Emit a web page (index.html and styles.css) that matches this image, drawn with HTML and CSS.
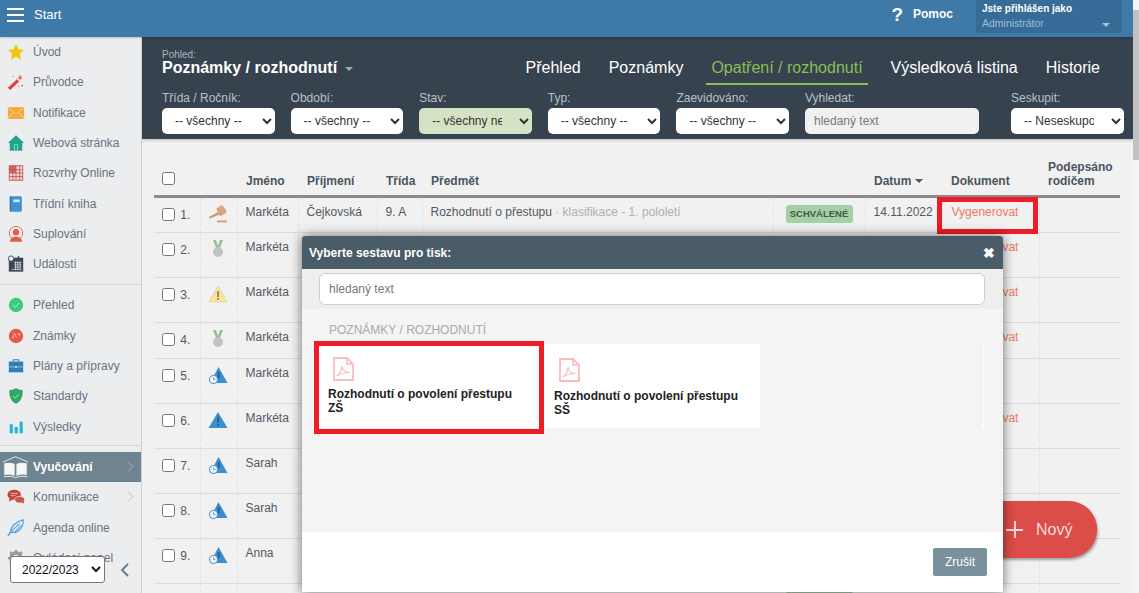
FILE: index.html
```html
<!DOCTYPE html>
<html lang="cs">
<head>
<meta charset="utf-8">
<title>Poznámky / rozhodnutí</title>
<link rel="stylesheet" href="styles.css">
</head>
<body>
<svg class="defs" width="0" height="0" aria-hidden="true">
  <symbol id="i-gavel" viewBox="0 0 20 20"><path d="m8.500 4.500 5.500-3.500 4.500 5.500-1 3-5 2.500-2.500-1.500z" fill="#dba583"/><path d="M9.500 8.500 1 13l.8 1.500L11 10.500z" fill="#c98f6e"/><rect x="9" y="16.500" width="10" height="1.800" fill="#d49a78"/></symbol>
  <symbol id="i-medal" viewBox="0 0 20 20"><path d="M5 1h3l2 6 2-6h3l-3.500 9h-3z" fill="#93bf9c"/><circle cx="10" cy="13" r="5" fill="#c2c2c2"/></symbol>
  <symbol id="i-warn" viewBox="0 0 20 20"><path d="M10 2 19 18H1z" fill="#f6e39f" stroke="#e6d184" stroke-width=".7"/><rect x="9.200" y="7" width="1.800" height="6" fill="#8f8a66"/><rect x="9.200" y="14" width="1.800" height="2" fill="#8f8a66"/></symbol>
  <symbol id="i-info" viewBox="0 0 20 20"><path d="M10 2 19.500 18H.5z" fill="#3b8fd0"/><rect x="9.200" y="7" width="1.800" height="6" fill="#24618f"/><rect x="9.200" y="14" width="1.800" height="2" fill="#24618f"/></symbol>
  <symbol id="i-clock" viewBox="0 0 20 20"><path d="M10.500 2 19.500 18H2z" fill="#3b8fd0"/><rect x="9.800" y="7" width="1.800" height="6" fill="#24618f"/><circle cx="5.500" cy="14.500" r="4" fill="#eef4f9" stroke="#5f97c4" stroke-width="1.100"/><path d="M5.500 12.300v2.200h2" fill="none" stroke="#5f97c4" stroke-width=".9"/></symbol>
  <symbol id="i-pdf" viewBox="0 0 21 24"><path d="M1 1h13l6 6v16H1z" fill="none" stroke="#fcbcbc" stroke-width="1.800"/><path d="M14 1v6h6" fill="none" stroke="#fcbcbc" stroke-width="1.500"/><path d="M3.500 19c3-1.500 5-5 5.500-10 .5 4 3 6.500 7.500 6.500-4.500 0-9 1-13 3.500z" fill="none" stroke="#fcbcbc" stroke-width="1.200"/></symbol>
</svg>

<header class="topbar">
  <div class="hamburger"><span></span><span></span><span></span></div>
  <span class="start">Start</span>
  <span class="help-mark">?</span>
  <span class="help-text">Pomoc</span>
  <div class="user">
    <div class="user-label">Jste přihlášen jako</div>
    <div class="user-role"><span>Administrátor</span><i class="caret caret-user"></i></div>
  </div>
</header>

<div class="layout">
  <nav class="sidebar">
    <div class="nav-group">
      <a class="nav-item"><svg class="nav-icon" viewBox="0 0 20 20"><path d="m10 1 2.700 6 6.300.7-4.700 4.300 1.300 6.500L10 15.300 4.400 18.500 5.700 12 1 7.700 7.300 7z" fill="#f1c40f"/></svg>Úvod</a>
      <a class="nav-item"><svg class="nav-icon" viewBox="0 0 20 20"><path d="m1 16.500 10-9.500 2.500 2.500-10 9.500z" fill="#d9443e"/><path d="m14 1.500.8 2 2-.5-.8 2 1.500 1.500-2.200.2-.8 1.800-1-1.800-2-.4 1.500-1.500z" fill="#e8776f"/><circle cx="17" cy="14" r="1" fill="#d9504a"/><circle cx="13" cy="15" r=".8" fill="#e8776f"/><circle cx="7" cy="4" r=".8" fill="#e8776f"/></svg>Průvodce</a>
      <a class="nav-item"><svg class="nav-icon" viewBox="0 0 20 20"><rect x="1" y="3.500" width="18" height="13" fill="#f2a83b"/><path d="m1 4 9 7 9-7M1 16l6.500-7M19 16l-6.500-7" fill="none" stroke="#fbdca8" stroke-width=".9"/></svg>Notifikace</a>
      <a class="nav-item"><svg class="nav-icon" viewBox="0 0 20 20"><path d="M10 1.500 19 10h-2v8.500H3V10H1z" fill="#1fa58a"/><rect x="8" y="11.500" width="4" height="7" fill="#bfe6dc"/><rect x="8.800" y="12.300" width="2.400" height="6.200" fill="#1fa58a"/></svg>Webová stránka</a>
      <a class="nav-item"><svg class="nav-icon" viewBox="0 0 20 20"><rect x="2.500" y="2" width="15" height="16" fill="#f2dcd9" stroke="#c0554d"/><path d="M2.500 6.500h15M2.500 10h15M2.500 14h15M6.500 2v16M10 2v16M14 2v16" stroke="#c0554d"/><rect x="2.500" y="2" width="7.500" height="8" fill="#c0554d" opacity=".85"/></svg>Rozvrhy Online</a>
      <a class="nav-item"><svg class="nav-icon" viewBox="0 0 20 20"><rect x="3.500" y="1.500" width="13" height="17" rx="1.500" fill="#3d93d6"/><rect x="3" y="1.500" width="1.500" height="17" fill="#2c74ad"/><rect x="7" y="5" width="7" height="3" fill="#d7eaf8"/></svg>Třídní kniha</a>
      <a class="nav-item"><svg class="nav-icon" viewBox="0 0 20 20"><circle cx="10" cy="9" r="7.500" fill="#fbeeec" stroke="#e05a4d"/><circle cx="10" cy="8" r="3.500" fill="#e05a4d"/><path d="M3 18.500c.5-4 4-5.500 7-5.500s6.500 1.500 7 5.500z" fill="#e05a4d"/></svg>Suplování</a>
      <a class="nav-item"><svg class="nav-icon" viewBox="0 0 20 20"><rect x="2" y="3" width="16" height="15.500" fill="#3a4652"/><path d="M8 8.500h8M8 11h8M8 13.500h8M5 16h11M9.500 7v10M12 7v10M14.500 7v10" stroke="#dfe3e7" stroke-width=".8"/><circle cx="4.500" cy="4" r="3" fill="#ebedef" stroke="#3a4652"/><rect x="12" y="1" width="1.500" height="3" fill="#3a4652"/></svg>Události</a>
    </div>
    <div class="nav-group">
      <a class="nav-item"><svg class="nav-icon" viewBox="0 0 20 20"><circle cx="10" cy="10" r="8" fill="#3ecb78"/><path d="m6.500 10 2.500 2.500 4.500-5" fill="none" stroke="#bdf0d1" stroke-width="1"/></svg>Přehled</a>
      <a class="nav-item"><svg class="nav-icon" viewBox="0 0 20 20"><circle cx="10" cy="10" r="8" fill="#e8574a"/><path d="m6 13 2.500-6 2 5M12 8h3M13.500 6.500v3" fill="none" stroke="#f7c3bd" stroke-width="1"/></svg>Známky</a>
      <a class="nav-item"><svg class="nav-icon" viewBox="0 0 20 20"><path d="M7 5V3h6v2" fill="none" stroke="#2f7fb8" stroke-width="1.200"/><rect x="2" y="5" width="16" height="12" fill="#2f7fb8"/><rect x="2" y="10.500" width="16" height="1" fill="#8fc0e0"/><rect x="9" y="10" width="2" height="2" fill="#cfe4f2"/></svg>Plány a přípravy</a>
      <a class="nav-item"><svg class="nav-icon" viewBox="0 0 20 20"><path d="M10 1.500c2.500 1.500 5 2 7.500 2 0 7-1.500 12-7.500 15-6-3-7.500-8-7.500-15 2.500 0 5-.5 7.500-2z" fill="#2fa866"/><path d="m7 10 2.200 2.200L13.500 8" fill="none" stroke="#c8eed8" stroke-width="1"/></svg>Standardy</a>
      <a class="nav-item"><svg class="nav-icon" viewBox="0 0 20 20"><rect x="3" y="7" width="3.500" height="10" fill="#24b5d6"/><rect x="8.500" y="10" width="3.500" height="7" fill="#24b5d6"/><rect x="14" y="4" width="3.500" height="13" fill="#24b5d6"/></svg>Výsledky</a>
    </div>
    <a class="nav-item nav-active"><svg class="nav-book" viewBox="0 0 30 26"><path d="M1 7 15 1l14 6" fill="none" stroke="#eef1f3" stroke-width="1"/><path d="M2 8c5-1 10-1 12.500 1v14C11 21 6 21 2 22z" fill="#f4f6f7" stroke="#71878f"/><path d="M28 8c-5-1-10-1-12.500 1v14c3.500-2 8.500-2 12.500-1z" fill="#f4f6f7" stroke="#71878f"/><path d="M2 23.500c5-1 10-1 13 1 3-2 8-2 13-1" fill="none" stroke="#eef1f3"/></svg><span>Vyučování</span><i class="chev chev-light"></i></a>
    <a class="nav-item"><svg class="nav-icon" viewBox="0 0 20 20"><ellipse cx="8" cy="7.500" rx="7.500" ry="5.500" fill="#c0453b"/><path d="m3 11-1 4 5-2.500z" fill="#c0453b"/><path d="M4 6h8M4 8.500h5.500" stroke="#f0c0bb" stroke-width="1"/><ellipse cx="14" cy="13" rx="5.500" ry="3.800" fill="#c9564c" stroke="#ebedef" stroke-width=".8"/><path d="m16 15.500 3 2-.5-3.500z" fill="#c9564c"/></svg>Komunikace<i class="chev"></i></a>
    <a class="nav-item"><svg class="nav-icon" viewBox="0 0 20 20"><path d="M1 19 4 14C4 9 9 3 18 1c.5 6-3 12-9 14l-5-.5z" fill="none" stroke="#5aa0dc" stroke-width="1.500"/><path d="M4.500 14 14 5M8 15 15.500 7" stroke="#5aa0dc" stroke-width="1.200"/></svg>Agenda online</a>
    <a class="nav-item"><svg class="nav-icon" viewBox="0 0 20 20"><circle cx="10" cy="10" r="5.500" fill="none" stroke="#999" stroke-width="4"/><path d="M10 1v3M10 16v3M1 10h3M16 10h3M3.500 3.500l2 2M14.500 14.500l2 2M3.500 16.500l2-2M14.500 5.500l2-2" stroke="#999" stroke-width="2.500"/></svg>Ovládací panel</a>
    <div class="side-foot">
      <select class="year"><option>2022/2023</option></select>
      <svg class="collapse" viewBox="0 0 10 16"><path d="M8 2 2 8l6 6" fill="none" stroke="#5f7a8c" stroke-width="1.800"/></svg>
    </div>
  </nav>

  <main class="content">
    <section class="panel">
      <div class="panel-top">
        <div class="view">
          <div class="view-label">Pohled:</div>
          <div class="view-title">Poznámky / rozhodnutí<i class="caret caret-view"></i></div>
        </div>
        <div class="tabs">
          <a class="tab">Přehled</a>
          <a class="tab">Poznámky</a>
          <a class="tab tab-active">Opatření / rozhodnutí</a>
          <a class="tab">Výsledková listina</a>
          <a class="tab">Historie</a>
        </div>
      </div>
      <div class="filters">
        <label class="filter"><span>Třída / Ročník:</span><select><option>-- všechny --</option></select></label>
        <label class="filter"><span>Období:</span><select><option>-- všechny --</option></select></label>
        <label class="filter"><span>Stav:</span><select class="select-on"><option>-- všechny neschválené --</option></select></label>
        <label class="filter"><span>Typ:</span><select><option>-- všechny --</option></select></label>
        <label class="filter"><span>Zaevidováno:</span><select><option>-- všechny --</option></select></label>
        <label class="filter filter-search"><span>Vyhledat:</span><input type="text" placeholder="hledaný text"></label>
        <label class="filter filter-group"><span>Seskupit:</span><select><option>-- Neseskupovat --</option></select></label>
      </div>
    </section>

    <table class="grid">
      <colgroup>
        <col class="c-no"><col class="c-ic"><col class="c-fn"><col class="c-ln"><col class="c-cl"><col class="c-su"><col class="c-st"><col class="c-da"><col class="c-do"><col class="c-si">
      </colgroup>
      <thead>
        <tr>
          <th><input type="checkbox" class="check check-head"></th>
          <th></th>
          <th>Jméno</th>
          <th>Příjmení</th>
          <th>Třída</th>
          <th>Předmět</th>
          <th></th>
          <th>Datum<i class="caret caret-sort"></i></th>
          <th>Dokument</th>
          <th>Podepsáno rodičem</th>
        </tr>
      </thead>
      <tbody>
        <tr class="r-first">
          <td><input type="checkbox" class="check"> 1.</td>
          <td><svg class="row-icon"><use href="#i-gavel"/></svg></td>
          <td>Markéta</td><td>Čejkovská</td><td>9. A</td>
          <td>Rozhodnutí o přestupu <span class="muted">· klasifikace - 1. pololetí</span></td>
          <td><span class="badge">SCHVÁLENÉ</span></td>
          <td>14.11.2022</td>
          <td class="doc-cell"><a class="gen">Vygenerovat</a><span class="mark"></span></td><td></td>
        </tr>
        <tr class="r-tall"><td><input type="checkbox" class="check"> 2.</td><td><svg class="row-icon"><use href="#i-medal"/></svg></td><td>Markéta</td><td></td><td></td><td></td><td></td><td></td><td><a class="gen">Vygenerovat</a></td><td></td></tr>
        <tr class="r-tall"><td><input type="checkbox" class="check"> 3.</td><td><svg class="row-icon"><use href="#i-warn"/></svg></td><td>Markéta</td><td></td><td></td><td></td><td></td><td></td><td><a class="gen">Vygenerovat</a></td><td></td></tr>
        <tr class="r-short"><td><input type="checkbox" class="check"> 4.</td><td><svg class="row-icon"><use href="#i-medal"/></svg></td><td>Markéta</td><td></td><td></td><td></td><td></td><td></td><td><a class="gen">Vygenerovat</a></td><td></td></tr>
        <tr class="r-tall"><td><input type="checkbox" class="check"> 5.</td><td><svg class="row-icon"><use href="#i-clock"/></svg></td><td>Markéta</td><td></td><td></td><td></td><td></td><td></td><td></td><td></td></tr>
        <tr class="r-tall"><td><input type="checkbox" class="check"> 6.</td><td><svg class="row-icon"><use href="#i-info"/></svg></td><td>Markéta</td><td></td><td></td><td></td><td></td><td></td><td><a class="gen">Vygenerovat</a></td><td></td></tr>
        <tr class="r-tall"><td><input type="checkbox" class="check"> 7.</td><td><svg class="row-icon"><use href="#i-clock"/></svg></td><td>Sarah</td><td></td><td></td><td></td><td></td><td></td><td></td><td></td></tr>
        <tr class="r-tall"><td><input type="checkbox" class="check"> 8.</td><td><svg class="row-icon"><use href="#i-clock"/></svg></td><td>Sarah</td><td></td><td></td><td></td><td></td><td></td><td></td><td></td></tr>
        <tr class="r-tall"><td><input type="checkbox" class="check"> 9.</td><td><svg class="row-icon"><use href="#i-clock"/></svg></td><td>Anna</td><td></td><td></td><td></td><td></td><td></td><td></td><td></td></tr>
        <tr class="r-tall"><td></td><td></td><td></td><td></td><td></td><td></td><td><span class="badge">SCHVÁLENÉ</span></td><td></td><td></td><td></td></tr>
      </tbody>
    </table>
  </main>
  <div class="scrollbar"><div class="thumb"></div></div>
</div>

<a class="fab"><span class="fab-plus"></span>Nový</a>

<section class="modal">
  <header class="modal-head"><span>Vyberte sestavu pro tisk:</span><span class="modal-x">✖</span></header>
  <div class="modal-search"><input type="text" placeholder="hledaný text"></div>
  <div class="modal-body">
    <h3 class="modal-section">POZNÁMKY / ROZHODNUTÍ</h3>
    <div class="cards">
      <a class="card card-marked"><svg class="pdf"><use href="#i-pdf"/></svg><span>Rozhodnutí o povolení přestupu ZŠ</span><span class="card-mark"></span></a>
      <a class="card card-second"><svg class="pdf"><use href="#i-pdf"/></svg><span>Rozhodnutí o povolení přestupu SŠ</span></a>
      <div class="card-rest"></div>
    </div>
  </div>
  <footer class="modal-foot"><button class="cancel">Zrušit</button></footer>
</section>
</body>
</html>
```

FILE: styles.css
```css
* { box-sizing: border-box; }
html, body { height: 100%; }
body {
  margin: 0;
  overflow: hidden;
  background: #f1f1f1;
  color: #46505a;
  font: 12px/14px "Liberation Sans", Arial, sans-serif;
}
.defs { position: absolute; }
i { font-style: normal; }
a { color: inherit; text-decoration: none; }

.topbar {
  height: 37px;
  display: flex;
  align-items: flex-start;
  background: #3e79a8;
  color: #fff;
  position: relative;
  z-index: 2;
  box-shadow: 0 1px 2px rgba(0,0,0,.2);
}
.hamburger { margin: 8px 0 0 7px; width: 17px; display: flex; flex-direction: column; gap: 4px; }
.hamburger span { height: 2px; background: #fff; display: block; }
.start { margin: 8px 0 0 10px; font-size: 13px; }
.help-mark { margin: 5px 0 0 auto; font-size: 19px; line-height: 20px; font-weight: 700; }
.help-text { margin: 7px 23px 0 10px; font-weight: 700; font-size: 12px; }
.user {
  width: 146px;
  height: 33px;
  margin-right: 17px;
  padding: 3px 6px;
  background: #366c97;
  border-radius: 0 0 3px 3px;
}
.user-label { font-size: 10px; font-weight: 700; line-height: 12px; }
.user-role { display: flex; justify-content: space-between; align-items: center; margin-top: 2px; font-size: 10.500px; line-height: 13px; color: #9dbcd8; }
.caret { display: inline-block; width: 0; height: 0; border: 4px solid transparent; border-top-color: currentColor; border-bottom-width: 0; }
.caret-user { margin: 2px 6px 0 0; color: #a9c3d9; }

.layout { display: flex; height: 556px; }
.sidebar {
  width: 142px;
  flex: none;
  height: 556px;
  background: #ebedef;
  border-right: 1px solid #cfcfcf;
  position: relative;
  overflow: hidden;
}
.nav-group { padding-bottom: 4.500px; margin-bottom: 5px; border-bottom: 1px solid #d6d6d6; }
.nav-group:nth-child(2) { padding-bottom: 3.500px; }
.nav-item {
  height: 30.330px;
  display: flex;
  align-items: center;
  padding-left: 7px;
  color: #6b7280;
  position: relative;
}
.nav-icon { width: 18px; height: 18px; margin-right: 8px; flex: none; }
.nav-active { background: #6e8490; color: #fff; font-weight: 700; height: 30px; padding-left: 2px; margin-top: 6px; }
.nav-book { width: 27px; height: 25px; margin-right: 4px; flex: none; }
.chev { position: absolute; right: 9px; top: 11px; width: 7px; height: 7px; border: solid #ccd1d5; border-width: 1px 1px 0 0; transform: rotate(45deg); }
.chev-light { border-color: #92a4ad; }
.side-foot { position: absolute; left: 10px; bottom: 10px; display: flex; align-items: center; gap: 15px; }
.year { width: 95px; height: 27px; border: 1px solid #767676; border-radius: 3px; background: #fff; color: #111; padding: 0 7px; font: 12px "Liberation Sans", Arial, sans-serif; }
.collapse { width: 10px; height: 16px; }

.content { flex: 1; min-width: 0; overflow: hidden; }
.panel { height: 102px; padding: 0 9px 0 20px; background: #37424f; box-shadow: 0 1px 3px rgba(0,0,0,.25); }
.panel-top { display: flex; justify-content: space-between; height: 49px; padding-top: 13px; }
.view-label { font-size: 10px; line-height: 10px; color: #aab2ba; }
.view-title { margin-top: -1px; font-size: 16px; line-height: 17px; font-weight: 700; color: #fff; }
.caret-view { margin: 0 0 2px 8px; color: #a3acb4; border-width: 4px 4px 0; }
.tabs { display: flex; gap: 18px; margin: -4px 19px 0 0; color: #fff; }
.tab { padding: 11px 5px 0; height: 39px; font-size: 16px; line-height: 22px; border-bottom: 2px solid transparent; }
.tab-active { color: #8dbe55; border-bottom-color: #8dbe55; }
.filters { display: flex; gap: 16px; padding-top: 5px; }
.filter { display: flex; flex-direction: column; width: 112.600px; flex: none; color: #b9c0c7; }
.filter span { height: 14px; margin-bottom: 3px; line-height: 14px; }
.filter select, .filter input {
  width: 100%;
  height: 26px;
  border: 0;
  border-radius: 5px;
  background: #fff;
  color: #333;
  padding: 0 14px 0 9px;
  font: 12px "Liberation Sans", Arial, sans-serif;
}
.filter select.select-on { background: #d5e3c4; }
.filter-search { width: 174px; }
.filter input { background: #f1f1f1; }
.filter input::placeholder, .modal-search input::placeholder { color: #777; opacity: 1; }
.filter-group { margin-left: 16px; }

.grid { margin: 21px 0 0 12px; width: 966px; border-collapse: collapse; table-layout: fixed; }
.c-no { width: 46px; } .c-ic { width: 37px; } .c-fn { width: 61px; } .c-ln { width: 79px; } .c-cl { width: 45px; }
.c-su { width: 351px; } .c-st { width: 92px; } .c-da { width: 77px; } .c-do { width: 97px; } .c-si { width: 81px; }
.grid th { height: 29px; padding: 0 8px 7px 9px; text-align: left; vertical-align: bottom; border-bottom: 3px solid #8a8a8a; font-weight: 700; color: #4a5560; }
.grid th:first-child { vertical-align: top; padding: 12px 0 0 8px; }
.grid td { padding: 7px 8px 0; vertical-align: top; border-bottom: 1px solid #dcdcdc; border-left: 1px dashed #e2e2e2; white-space: nowrap; color: #515a64; }
.grid td:first-child { border-left: 0; padding-top: 10px; }
.r-first td { height: 36px; }
.r-tall td { height: 45px; }
.r-short td { height: 36px; }
.check { width: 13px; height: 13px; margin: 0 2px 0 0; vertical-align: -2px; }
.check-head { vertical-align: top; }
.row-icon { width: 20px; height: 20px; display: block; margin: -1px 0 0 -1px; }
.muted { color: #b0b0b0; }
.badge { display: inline-block; margin: 0 0 0 4px; padding: 3px 3px; width: 67px; text-align: center; border-radius: 3px; background: #a5cfa5; color: #3f5d48; font-size: 9.500px; font-weight: 700; line-height: 12px; }
.caret-sort { margin: 0 0 2px 4px; color: #4a5560; }
.doc-cell { position: relative; }
.gen { color: #f07a5c; margin-left: 1px; }
.mark { position: absolute; left: -6px; top: -1px; width: 101px; height: 37px; border: 5px solid #ee1c25; pointer-events: none; }

.scrollbar { width: 6px; flex: none; background: #f4f4f4; margin-top: -37px; height: 593px; position: relative; z-index: 3; }
.thumb { height: 150px; margin-top: 10px; background: #c1c1c1; }

.fab {
  position: absolute;
  left: 960px;
  top: 501px;
  width: 137px;
  height: 57px;
  padding-left: 76px;
  display: flex;
  align-items: center;
  border-radius: 28px;
  background: #dc4c48;
  color: #f4dede;
  font-size: 16px;
  box-shadow: 1px 2px 3px rgba(0,0,0,.35);
}
.fab-plus { position: absolute; left: 46px; top: 20px; width: 17px; height: 17px; background: linear-gradient(#eed8d8,#eed8d8) center/2px 100% no-repeat, linear-gradient(#eed8d8,#eed8d8) center/100% 2px no-repeat; }

.modal {
  position: absolute;
  left: 302px;
  top: 236px;
  width: 701px;
  height: 356px;
  display: flex;
  flex-direction: column;
  background: #fff;
  border-radius: 3px 3px 0 0;
  box-shadow: 0 0 12px rgba(0,0,0,.55);
}
.modal-head { height: 33px; flex: none; display: flex; align-items: center; justify-content: space-between; padding: 0 8px 0 7px; background: #495c67; color: #fff; font-weight: 700; border-radius: 3px 3px 0 0; }
.modal-x { font-size: 14px; }
.modal-search { height: 40px; flex: none; padding: 4px 18px 0 17px; background: #eeeeee; }
.modal-search input { width: 100%; height: 32px; padding: 0 9px; border: 1px solid #cccccc; border-radius: 6px; background: #fff; font: 12px "Liberation Sans", Arial, sans-serif; }
.modal-body { height: 223px; flex: none; background: #f4f4f4; padding-top: 15px; }
.modal-section { margin: 0 0 7px 27px; font-size: 12px; line-height: 13px; font-weight: 400; color: #aaa; }
.cards { display: flex; margin-left: 16px; }
.card { display: flex; flex-direction: column; width: 226px; height: 84px; padding: 12px 10px 0; background: #fff; color: #222; font-weight: 700; position: relative; }
.card span { display: block; margin-top: 7px; max-width: 190px; }
.card-marked { padding-top: 13px; }
.card-marked span { margin-top: 6px; }
.card-second { width: 216px; padding-top: 14px; }
.card-second span { margin-top: 7px; }
.card .card-mark { position: absolute; left: -4px; top: -3px; width: 230px; height: 93px; margin: 0; max-width: none; border: 5px solid #ee1c25; }
.pdf { width: 21px; height: 24px; margin-left: 5px; flex: none; }
.card-rest { width: 224px; height: 84px; border-right: 1px solid #fff; }
.modal-foot { flex: 1; display: flex; justify-content: flex-end; align-items: flex-start; padding: 16px 16px 0 0; background: #fff; }
.cancel { width: 54px; height: 28px; border: 0; border-radius: 2px; background: #7a919d; color: #fff; font: 12px "Liberation Sans", Arial, sans-serif; }
```
